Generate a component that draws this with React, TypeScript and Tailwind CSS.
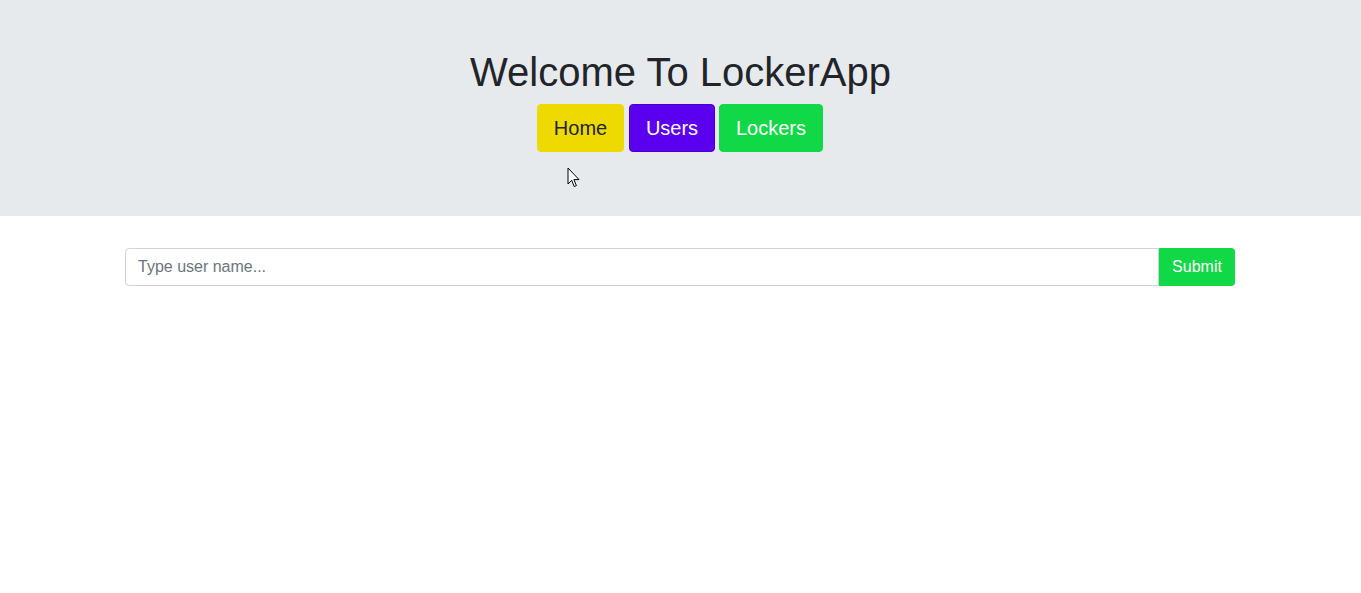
import React from "react";

export default function App() {
  return (
    <div className="min-h-[593px] bg-white font-['Liberation_Sans',Arial,sans-serif] text-[#212529] relative">
      <header className="bg-[#e7eaed] pt-[48px] pb-[64px] flex flex-col items-center">
        <h1 className="text-[40px] leading-[48px] font-normal m-0">Welcome To LockerApp</h1>
        <div className="mt-[8px] pr-[1px] flex">
          <button className="w-[87px] h-[48px] text-[20px] leading-[30px] rounded-[4px] bg-[#efda00] text-[#212529] border border-[#efda00]">Home</button>
          <button className="ml-[5px] w-[86px] h-[48px] text-[20px] leading-[30px] rounded-[4px] bg-[#5b00ef] text-white border border-[#4a00c8]">Users</button>
          <button className="ml-[4px] w-[104px] h-[48px] text-[20px] leading-[30px] rounded-[4px] bg-[#10d846] text-white border border-[#10d846]">Lockers</button>
        </div>
      </header>
      <main className="pl-[125px] pr-[126px] mt-[32px] flex">
        <input
          type="text"
          placeholder="Type user name..."
          className="flex-1 min-w-0 h-[38px] px-3 text-[16px] border border-[#ced4da] rounded-l-[4px] outline-none placeholder:text-[#6c757d] text-[#495057]"
        />
        <button className="w-[76px] h-[38px] text-[16px] bg-[#10d846] text-white rounded-r-[4px]">Submit</button>
      </main>
      <svg className="absolute left-[567px] top-[167px]" width="14" height="22" viewBox="0 0 14 22">
        <path d="M1 1 L1 17 L4.7 13.3 L7.2 19.5 L9.4 18.6 L6.9 12.6 L12 12.6 Z" fill="white" stroke="black" strokeWidth="1" strokeLinejoin="round" />
      </svg>
    </div>
  );
}
